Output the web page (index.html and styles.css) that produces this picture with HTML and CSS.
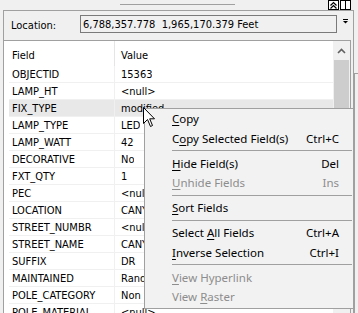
FILE: index.html
```html
<!DOCTYPE html>
<html>
<head>
<meta charset="utf-8">
<link rel="stylesheet" href="styles.css">
</head>
<body>
<div class="main">
  <div class="topbar">
    <div class="topline"></div>
    <div class="pins">
      <div class="pin"><svg width="9" height="8" viewBox="0 0 9 8"><path d="M1.5 4.5 L4.5 1.5 L7.5 4.5 M1.5 7.5 L4.5 4.5 L7.5 7.5" fill="none" stroke="#000" stroke-width="1.2"/></svg></div>
      <div class="pin"><svg width="9" height="8" viewBox="0 0 9 8"><path d="M4.5 0 V8" stroke="#000" stroke-width="1"/></svg></div>
    </div>
  </div>
  <div class="panel">
    <div class="locrow">
      <div class="loclabel">Location:</div>
      <div class="locbox">6,788,357.778  1,965,170.379 Feet</div>
      <div class="locdrop"><svg width="5" height="5" viewBox="0 0 5 5"><rect x="0" y="0" width="5" height="1" fill="#000"/><path d="M0 2 H5 L2.5 4.5 Z" fill="#000"/></svg></div>
    </div>
    <div class="grid">
      <div class="table">
        <div class="hrow"><div class="hcell fcol">Field</div><div class="hcell vcol">Value</div></div>
        <div class="row"><div class="fcol">OBJECTID</div><div class="vcol">15363</div></div>
        <div class="row"><div class="fcol">LAMP_HT</div><div class="vcol">&lt;null&gt;</div></div>
        <div class="row hot"><div class="fcol">FIX_TYPE</div><div class="vcol">modified</div></div>
        <div class="row"><div class="fcol">LAMP_TYPE</div><div class="vcol">LED</div></div>
        <div class="row"><div class="fcol">LAMP_WATT</div><div class="vcol">42</div></div>
        <div class="row"><div class="fcol">DECORATIVE</div><div class="vcol">No</div></div>
        <div class="row"><div class="fcol">FXT_QTY</div><div class="vcol">1</div></div>
        <div class="row"><div class="fcol">PEC</div><div class="vcol">&lt;null&gt;</div></div>
        <div class="row"><div class="fcol">LOCATION</div><div class="vcol">CANYON</div></div>
        <div class="row"><div class="fcol">STREET_NUMBR</div><div class="vcol">&lt;null&gt;</div></div>
        <div class="row"><div class="fcol">STREET_NAME</div><div class="vcol">CANYON</div></div>
        <div class="row"><div class="fcol">SUFFIX</div><div class="vcol">DR</div></div>
        <div class="row"><div class="fcol">MAINTAINED</div><div class="vcol">Random</div></div>
        <div class="row"><div class="fcol">POLE_CATEGORY</div><div class="vcol">Non Standard</div></div>
        <div class="row"><div class="fcol">POLE_MATERIAL</div><div class="vcol">&lt;null&gt;</div></div>
      </div>
      <div class="scrollbar">
        <div class="sbup"><svg width="9" height="6" viewBox="0 0 9 6"><path d="M1 5 L4.5 1.5 L8 5" fill="none" stroke="#606060" stroke-width="1.6"/></svg></div>
        <div class="sbthumb"></div>
      </div>
    </div>
  </div>
</div>
<div class="edge"><div class="edgebox"></div></div>

<div class="menu">
  <div class="mi"><span><u>C</u>opy</span></div>
  <div class="mi"><span>C<u>o</u>py Selected Field(s)</span><span class="sc">Ctrl+C</span></div>
  <div class="sep"></div>
  <div class="mi"><span><u>H</u>ide Field(s)</span><span class="sc">Del</span></div>
  <div class="mi dis"><span><u>U</u>nhide Fields</span><span class="sc">Ins</span></div>
  <div class="sep"></div>
  <div class="mi"><span><u>S</u>ort Fields</span></div>
  <div class="sep"></div>
  <div class="mi"><span>Select <u>A</u>ll Fields</span><span class="sc">Ctrl+A</span></div>
  <div class="mi"><span><u>I</u>nverse Selection</span><span class="sc">Ctrl+I</span></div>
  <div class="sep"></div>
  <div class="mi dis"><span><u>V</u>iew Hyperlink</span></div>
  <div class="mi dis"><span>View <u>R</u>aster</span></div>
</div>

<svg class="cursor" width="13" height="21" viewBox="0 0 13 21"><path d="M0.5 0.5 V16.5 L4.5 12.5 L7.5 19.5 L9.5 18.5 L6.7 11.8 H11.5 Z" fill="#fff" stroke="#000" stroke-width="1" stroke-linejoin="miter"/></svg>
</body>
</html>
```

FILE: styles.css
```css
html, body {
  margin: 0;
  padding: 0;
}
body {
  width: 358px;
  height: 313px;
  overflow: hidden;
  background: #f0f0f0;
  position: relative;
  display: flex;
  font-family: "DejaVu Sans Condensed", "Liberation Sans Narrow", "DejaVu Sans", sans-serif;
  font-size: 11px;
  color: #000;
}
.main {
  width: 354px;
  flex: none;
  display: flex;
  flex-direction: column;
}
.edge {
  flex: 1;
  padding-top: 73px;
}
.edgebox {
  height: 240px;
  border-left: 1px solid #a0a0a0;
  border-top: 1px solid #a0a0a0;
  background: #f0f0f0;
}
.topbar {
  height: 10px;
  display: flex;
  align-items: flex-start;
}
.topline {
  margin-left: 120px;
  margin-top: 4px;
  width: 115px;
  height: 1px;
  background: #a0a0a0;
}
.pins {
  margin-left: auto;
  margin-right: 3px;
  display: flex;
  gap: 1px;
}
.pin {
  width: 11px;
  height: 10px;
  box-sizing: border-box;
  border: 1px solid #000;
  background: #fff;
  display: flex;
  align-items: center;
  justify-content: center;
}
.panel {
  margin-left: 3px;
  flex: 1;
  border: 1px solid #a0a0a0;
  border-bottom: none;
  display: flex;
  flex-direction: column;
}
.locrow {
  height: 29px;
  display: flex;
  align-items: flex-start;
}
.loclabel {
  width: 76px;
  box-sizing: border-box;
  padding-left: 7px;
  margin-top: 8px;
  line-height: 14px;
}
.locbox {
  margin-top: 4px;
  width: 257px;
  height: 18px;
  box-sizing: border-box;
  border: 1px solid #7a7a7a;
  background: #f0f0f0;
  padding-left: 2px;
  padding-top: 1px;
  line-height: 15px;
  white-space: pre;
}
.locdrop {
  margin-left: 6px;
  margin-top: 8px;
  display: flex;
}
.grid {
  flex: 1;
  margin-right: 2px;
  border-top: 1px solid #a0a0a0;
  border-right: 1px solid #a0a0a0;
  background: #fff;
  display: flex;
  overflow: hidden;
}
.table {
  flex: 1;
  overflow: hidden;
}
.hrow {
  height: 25px;
  display: flex;
}
.hcell {
  padding-top: 8px;
  line-height: 14px;
}
.hrow .fcol {
  border-right: 1px solid #e5e5e5;
}
.row {
  height: 17px;
  box-sizing: border-box;
  margin-left: 5px;
  border-bottom: 1px solid #f0f0f0;
  display: flex;
  padding-top: 2px;
  line-height: 14px;
  white-space: nowrap;
}
.row.hot {
  background: #e8e8e8;
}
.fcol {
  width: 111px;
  box-sizing: border-box;
  padding-left: 8px;
  flex: none;
}
.row .fcol {
  width: 106px;
  padding-left: 3px;
  border-right: 1px solid #f0f0f0;
  margin-top: -2px;
  padding-top: 2px;
}
.vcol {
  padding-left: 6px;
  overflow: hidden;
}
.scrollbar {
  width: 17px;
  flex: none;
  background: #f0f0f0;
  display: flex;
  flex-direction: column;
}
.sbup {
  height: 19px;
  display: flex;
  align-items: center;
  justify-content: center;
}
.sbthumb {
  height: 120px;
  margin: 0 1px;
  background: #cdcdcd;
}
.menu {
  position: absolute;
  left: 144px;
  top: 108px;
  width: 210px;
  box-sizing: border-box;
  border: 1px solid #a0a0a0;
  background: #f2f2f2;
  font-family: "Noto Sans", "Open Sans", sans-serif;
  font-size: 11.5px;
  padding: 0 0 1px 0;
}
.mi {
  height: 19.5px;
  display: flex;
  align-items: center;
  padding-left: 27px;
  padding-right: 14px;
  color: #000;
  white-space: nowrap;
}
.mi .sc {
  margin-left: auto;
}
.mi.dis {
  color: #8d8d8d;
}
.mi u {
  text-decoration: underline;
  text-underline-offset: 2px;
}
.sep {
  height: 1px;
  margin: 2.25px 1px 2.25px 27px;
  background: #a0a0a0;
}
.cursor {
  position: absolute;
  left: 143px;
  top: 107px;
}
```
